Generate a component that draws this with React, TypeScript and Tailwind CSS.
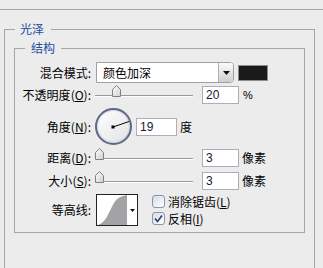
import React from "react"

const cjk = "font-['Noto_Sans_CJK_SC','Noto_Sans',sans-serif]"

function Thumb({ offset }: { offset: number }) {
  return (
    <svg
      width="9"
      height="12"
      viewBox="0 0 9 12"
      className="absolute top-[-1px]"
      style={{ left: offset }}
    >
      <defs>
        <linearGradient id="tg" x1="0" y1="0" x2="1" y2="1">
          <stop offset="0" stopColor="#ffffff" />
          <stop offset="1" stopColor="#cfcfcf" />
        </linearGradient>
      </defs>
      <polygon
        points="0.5,4.5 4.5,0.5 8.5,4.5 8.5,11.5 0.5,11.5"
        fill="url(#tg)"
        stroke="#808080"
      />
    </svg>
  )
}

function Slider({ pos }: { pos: number }) {
  return (
    <div className="relative w-[106px] h-[18px]">
      <div className="absolute left-[4px] top-[9px] w-[98px] h-[1px] bg-[#9a9a9a]" />
      <div className="absolute left-[4px] top-[10px] w-[98px] h-[1px] bg-white" />
      <Thumb offset={pos} />
    </div>
  )
}

function Label({ text, k }: { text: string; k?: string }) {
  return (
    <div className="w-[76px] shrink-0 text-right text-[12px] leading-[14px] text-black whitespace-nowrap">
      {text}
      {k && (
        <>
          (<span className="underline">{k}</span>)
        </>
      )}
      :
    </div>
  )
}

function NumInput({ value, w = 37 }: { value: string; w?: number }) {
  return (
    <div
      className="h-[18px] bg-white border border-[#a9b0b8] pl-[3px] text-[12px] leading-[16px] text-[#1a1a2e] font-['Liberation_Sans',sans-serif]"
      style={{ width: w }}
    >
      {value}
    </div>
  )
}

export default function App() {
  return (
    <div className={`w-[323px] h-[268px] overflow-hidden bg-[#ececec] ${cjk}`}>
      <div className="h-[9px]" />
      <div className="h-[1px] bg-[#a8a8a8]" />
      <fieldset className="ml-[4px] mt-[12px] w-[311px] h-[270px] border border-[#a5a5a5] pl-[9px] pr-[9px] pt-[5px]">
        <legend className="ml-[1px] pl-[5px] pr-[7px] text-[12px] leading-[14px] text-[#1d4f9e]">
          光泽
        </legend>
        <fieldset className="border border-[#a5a5a5] pt-[7px] pb-[6px]">
          <legend className="ml-[10px] px-[6px] text-[12px] leading-[14px] text-[#1d4f9e]">
            结构
          </legend>

          <div className="flex items-center h-[21px]">
            <Label text="混合模式" />
            <div className="ml-[5px] flex h-[21px] w-[138px] bg-white border border-[#a0a0a0] rounded-r-[4px] overflow-hidden">
              <div className="flex-1 pl-[6px] text-[12px] leading-[19px] text-black">
                颜色加深
              </div>
              <div className="w-[15px] flex items-center justify-center border-l border-[#b0b0b0] bg-gradient-to-b from-[#fbfbfb] to-[#cfcfcf]">
                <svg width="7" height="4" viewBox="0 0 7 4">
                  <polygon points="0,0 7,0 3.5,4" fill="#111" />
                </svg>
              </div>
            </div>
            <div className="ml-[4px] w-[30px] h-[16px] bg-[#1a1a1a] border border-[#8c8c8c]" />
          </div>

          <div className="mt-[3px] flex items-center h-[18px]">
            <Label text="不透明度" k="O" />
            <Slider pos={21} />
            <div className="ml-[5px]">
              <NumInput value="20" />
            </div>
            <div className="ml-[4px] text-[11px] leading-[14px] text-black font-['Liberation_Sans',sans-serif]">%</div>
          </div>

          <div className="mt-[4px] flex items-center h-[37px]">
            <Label text="角度" k="N" />
            <div className="ml-[4px] relative w-[37px] h-[37px] rounded-full border-2 border-[#5d6985] bg-gradient-to-br from-[#ffffff] to-[#e2e2e6] shadow-[inset_0_0_2px_#9aa0b0]">
              <svg width="37" height="37" viewBox="0 0 37 37" className="absolute left-[-2px] top-[-2px]">
                <line x1="18" y1="19" x2="34" y2="13.5" stroke="#000" strokeWidth="1" />
                <rect x="16.5" y="17.5" width="3" height="3" fill="#000" />
              </svg>
            </div>
            <div className="ml-[4px]">
              <NumInput value="19" w={41} />
            </div>
            <div className="ml-[3px] text-[12px] leading-[14px] text-black">度</div>
          </div>

          <div className="mt-[4px] flex items-center h-[18px]">
            <Label text="距离" k="D" />
            <Slider pos={4} />
            <div className="ml-[5px]">
              <NumInput value="3" />
            </div>
            <div className="ml-[3px] text-[12px] leading-[14px] text-black">像素</div>
          </div>

          <div className="mt-[5px] flex items-center h-[18px]">
            <Label text="大小" k="S" />
            <Slider pos={4} />
            <div className="ml-[5px]">
              <NumInput value="3" />
            </div>
            <div className="ml-[3px] text-[12px] leading-[14px] text-black">像素</div>
          </div>

          <div className="mt-[4px] flex items-center h-[32px]">
            <Label text="等高线" />
            <div className="ml-[5px] flex h-[32px] w-[42px] bg-white border border-[#222]">
              <svg width="30" height="30" viewBox="0 0 30 30" className="shrink-0">
                <path d="M0,30 C9,29 12,16 17,8 C20,3 24,1 30,0 L30,30 Z" fill="#a3a3a6" />
              </svg>
              <div className="flex-1 flex items-center justify-center">
                <svg width="5" height="3" viewBox="0 0 5 3">
                  <polygon points="0,0 5,0 2.5,3" fill="#111" />
                </svg>
              </div>
            </div>
            <div className="ml-[14px] flex flex-col gap-[4px] text-[12px] leading-[13px] text-black">
              <div className="flex items-center gap-[3px]">
                <div className="w-[13px] h-[13px] rounded-[3px] border border-[#8596b3] bg-gradient-to-br from-[#d5dbe6] to-[#ffffff]" />
                <span>
                  消除锯齿(<span className="underline">L</span>)
                </span>
              </div>
              <div className="flex items-center gap-[3px]">
                <div className="w-[13px] h-[13px] rounded-[3px] border border-[#8596b3] bg-gradient-to-br from-[#d5dbe6] to-[#ffffff] flex items-center justify-center">
                  <svg width="9" height="9" viewBox="0 0 9 9">
                    <path d="M1,4.5 L3.5,7.5 L8,1.5" fill="none" stroke="#2b3f73" strokeWidth="1.6" />
                  </svg>
                </div>
                <span>
                  反相(<span className="underline">I</span>)
                </span>
              </div>
            </div>
          </div>
        </fieldset>
      </fieldset>
    </div>
  )
}
